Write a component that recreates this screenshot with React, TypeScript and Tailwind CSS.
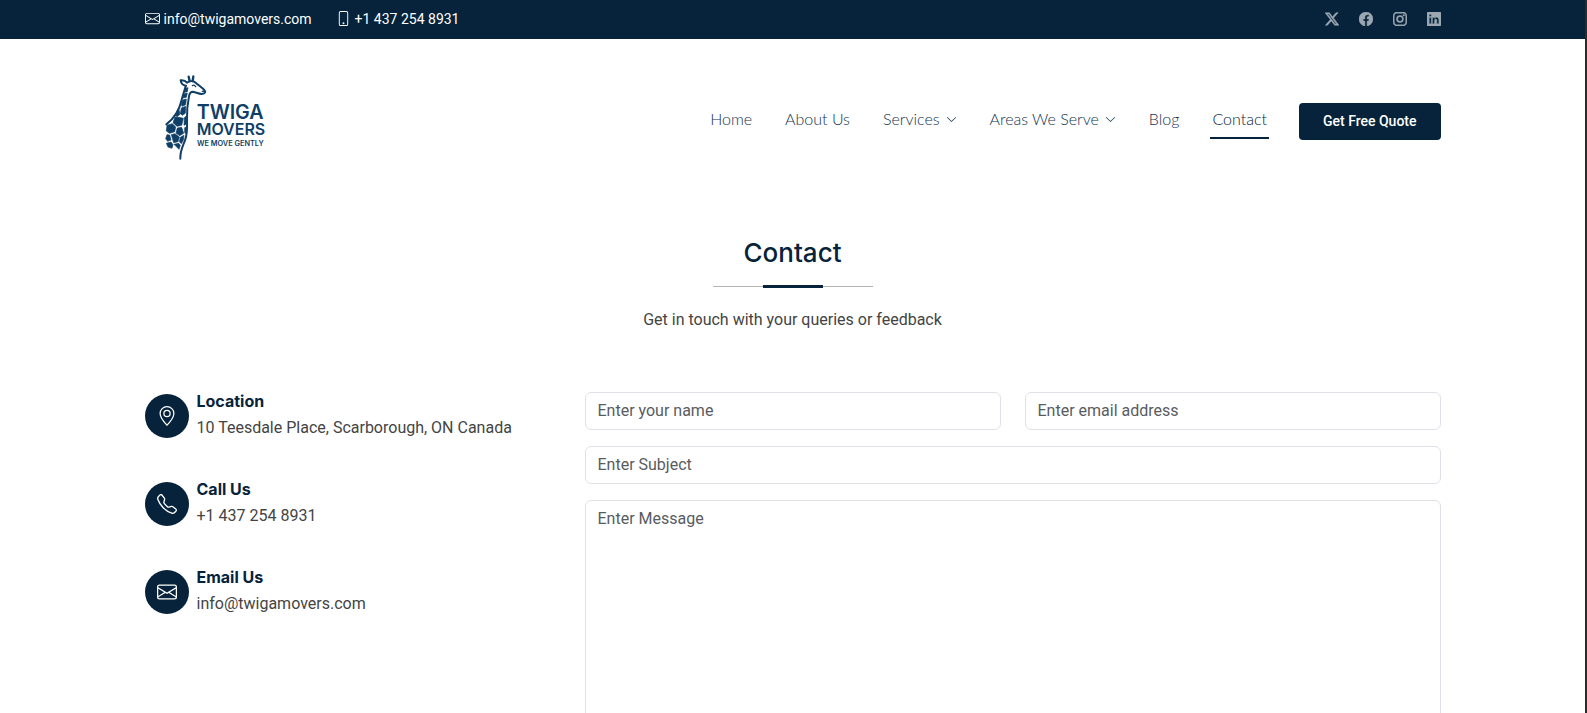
import type { ReactNode } from "react";
import {
  BsChevronDown,
  BsEnvelope,
  BsFacebook,
  BsGeoAlt,
  BsInstagram,
  BsLinkedin,
  BsPhone,
  BsTelephone,
  BsTwitterX,
} from "react-icons/bs";

const container = "mx-auto w-full max-w-[1320px] px-3";

function Logo() {
  return (
    <svg viewBox="0 0 360 300" className="ml-2.5 h-[100px] w-[120px]" role="img" aria-label="Twiga Movers">
      <g fill="none" stroke="#0f3f66" strokeWidth="6" strokeLinecap="round" strokeLinejoin="round">
        <path d="M101 35 L104 48 M115 34 L113 48" strokeWidth="7" />
        <path d="M93 62 C84 61 78 54 77 46 C85 45 92 48 96 53 C104 48 116 47 123 54 C131 61 142 69 149 76 C153 82 148 87 140 87 C130 87 124 82 114 80 C106 80 103 86 102 94 C97 118 95 140 96 165 C97 192 97 208 90 226 C83 244 75 258 76 281" />
        <path d="M92 64 C87 80 83 92 79 108 C73 134 60 158 34 178" />
        <path d="M142 79 L147 78 M112 62 C116 59 120 61 122 65" strokeWidth="4" />
      </g>
      <g fill="#0f3f66" stroke="#0f3f66" strokeWidth="2" strokeLinejoin="round">
        <path d="M90 70 L99 68 L97 80 L89 82Z" />
        <path d="M86 87 L97 84 L94 97 L84 99Z" />
        <path d="M83 105 L94 102 L92 119 L81 124 L79 118Z" />
        <path d="M79 129 L92 124 L91 145 L82 151 L76 146Z" />
        <path d="M72 134 L75 148 L66 155 L62 151Z" />
        <path d="M60 156 L72 157 L85 160 L80 181 L66 184 L54 173Z" />
        <path d="M88 158 L93 154 L93 178 L87 181Z" />
        <path d="M36 181 L52 176 L62 186 L59 200 L44 205 L34 198Z" />
        <path d="M67 189 L80 187 L86 205 L74 212 L63 204Z" />
        <path d="M89 188 L94 186 L92 206 L89 203Z" />
        <path d="M36 209 L44 210 L48 225 L38 229 L32 221Z" />
        <path d="M49 209 L60 206 L73 216 L69 230 L56 233Z" />
        <path d="M76 217 L87 211 L85 225 L79 236 L73 230Z" />
        <path d="M34 235 L48 231 L54 239 L51 250 L39 246Z" />
        <path d="M57 238 L71 235 L76 241 L72 253Z" />
      </g>
      <text fill="#0f3f66" fontWeight="600" className="font-['Inter',sans-serif]">
        <tspan x="125" y="163" fontSize="59">TWIGA</tspan>
        <tspan x="125" y="210" fontSize="48">MOVERS</tspan>
        <tspan x="126" y="242" fontSize="22">WE MOVE GENTLY</tspan>
      </text>
    </svg>
  );
}

function NavLink({ children, menu, active }: { children: ReactNode; menu?: boolean; active?: boolean }) {
  return (
    <li>
      <a
        href="#"
        className={
          active
            ? "flex items-center border-b-2 border-[#06233b] px-0.5 pt-1.5 pb-2 text-[#06233b]"
            : "flex items-center gap-1.5 border-b-2 border-transparent px-0.5 pt-1.5 pb-2 text-[#123450]"
        }
      >
        {children}
        {menu && <BsChevronDown size={11} />}
      </a>
    </li>
  );
}

function InfoItem({ icon, title, children }: { icon: ReactNode; title: string; children: ReactNode }) {
  return (
    <div className="flex gap-2">
      <div className="mt-0.5 flex size-11 shrink-0 items-center justify-center rounded-full bg-[#06233b] text-white">
        {icon}
      </div>
      <div>
        <h3 className="mb-1.5 font-['Inter',sans-serif] leading-[18px] font-bold text-[#06233b]">{title}</h3>
        <p className="leading-6">{children}</p>
      </div>
    </div>
  );
}

const field =
  "block w-full rounded-md border border-[#dee2e6] bg-white px-3 py-1.5 leading-6 text-[#212529] placeholder:text-[#595c5f] placeholder:opacity-100";

const social = [
  { name: "X", Icon: BsTwitterX },
  { name: "Facebook", Icon: BsFacebook },
  { name: "Instagram", Icon: BsInstagram },
  { name: "LinkedIn", Icon: BsLinkedin },
];

export default function App() {
  return (
    <div className="h-screen overflow-hidden border-r-2 border-[#2b2b2b] bg-white font-['Roboto',sans-serif] text-base text-[#444444]">
      <div className="bg-[#06233b] text-sm text-white">
        <div className={`${container} flex h-[39px] items-center justify-between pb-0.5`}>
          <div className="flex items-center gap-6">
            <a href="#" className="flex items-center gap-1">
              <BsEnvelope size={15} />
              info@twigamovers.com
            </a>
            <a href="#" className="flex items-center gap-1">
              <BsPhone size={15} />
              +1 437 254 8931
            </a>
          </div>
          <div className="flex items-center gap-5 text-[#9ba7b1]">
            {social.map(({ name, Icon }) => (
              <a key={name} href="#" aria-label={name}>
                <Icon size={14} strokeWidth={0.5} />
              </a>
            ))}
          </div>
        </div>
      </div>

      <header className={`${container} flex items-center justify-between pt-[26px] pb-10`}>
        <a href="#">
          <Logo />
        </a>
        <div className="mt-3 flex items-center gap-[30px]">
          <nav>
            <ul className="flex items-center gap-[29px] font-['Lato',sans-serif] leading-5 font-light">
              <NavLink>Home</NavLink>
              <NavLink>About Us</NavLink>
              <NavLink menu>Services</NavLink>
              <NavLink menu>Areas We Serve</NavLink>
              <NavLink>Blog</NavLink>
              <NavLink active>Contact</NavLink>
            </ul>
          </nav>
          <a href="#" className="rounded bg-[#06233b] px-6 py-2 text-sm leading-[21px] font-medium text-white">
            Get Free Quote
          </a>
        </div>
      </header>

      <main className={container}>
        <div className="flex flex-col items-center pt-8">
          <h1 className="font-['Inter',sans-serif] text-[26px] leading-8 font-medium text-[#06233b]">Contact</h1>
          <div className="mt-4 flex h-[3px] w-40 items-center justify-center">
            <span className="h-px flex-1 bg-[#b4b4b4]" />
            <span className="h-[3px] w-[60px] bg-[#06233b]" />
            <span className="h-px flex-1 bg-[#b4b4b4]" />
          </div>
          <p className="mt-5 leading-6">Get in touch with your queries or feedback</p>
        </div>

        <div className="mt-[60px] grid grid-cols-3 gap-6">
          <div className="flex flex-col gap-10">
            <InfoItem icon={<BsGeoAlt size={20} />} title="Location">
              10 Teesdale Place, Scarborough, ON Canada
            </InfoItem>
            <InfoItem icon={<BsTelephone size={20} />} title="Call Us">
              +1 437 254 8931
            </InfoItem>
            <InfoItem icon={<BsEnvelope size={20} />} title="Email Us">
              info@twigamovers.com
            </InfoItem>
          </div>
          <form className="col-span-2 flex flex-col gap-4">
            <div className="grid grid-cols-2 gap-6">
              <input type="text" aria-label="Name" placeholder="Enter your name" className={field} />
              <input type="email" aria-label="Email" placeholder="Enter email address" className={field} />
            </div>
            <input type="text" aria-label="Subject" placeholder="Enter Subject" className={field} />
            <textarea aria-label="Message" rows={10} placeholder="Enter Message" className={field} />
          </form>
        </div>
      </main>
    </div>
  );
}
